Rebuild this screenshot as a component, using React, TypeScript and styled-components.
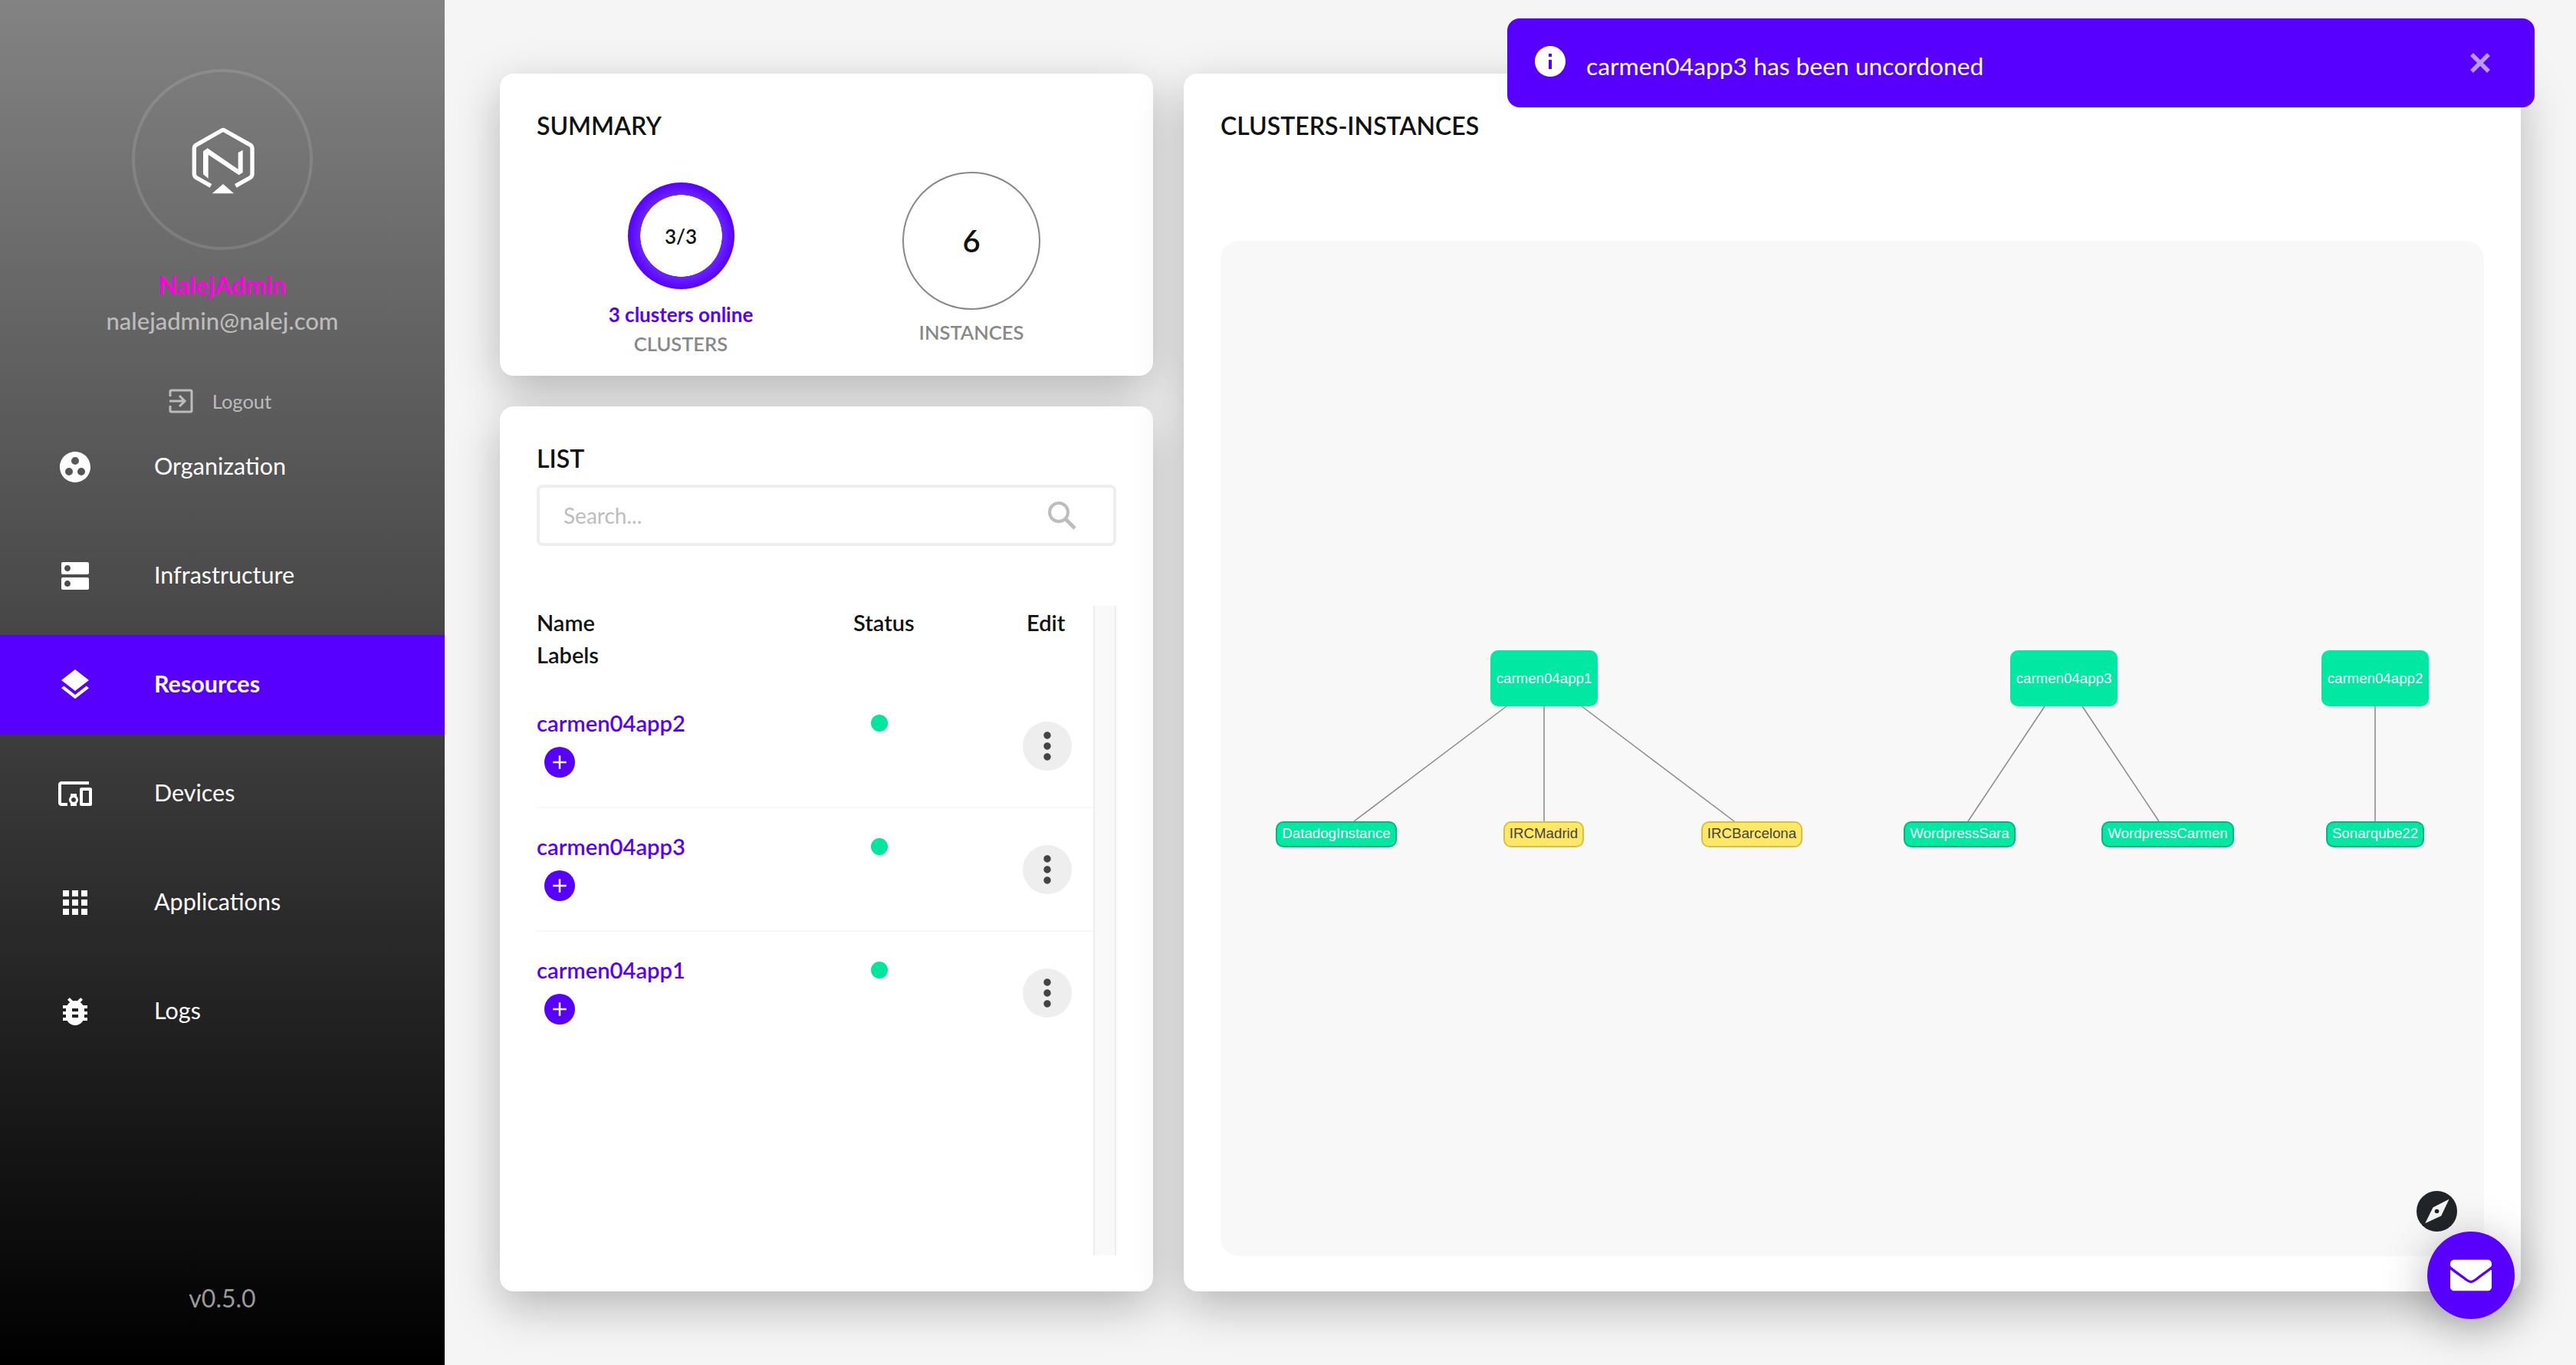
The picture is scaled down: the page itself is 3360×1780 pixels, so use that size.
import styled, { createGlobalStyle } from 'styled-components';
import { MdGroupWork, MdDns, MdLayers, MdDevicesOther, MdApps, MdBugReport, MdMoreVert, MdAdd, MdInfo } from 'react-icons/md';
import { FaEnvelope } from 'react-icons/fa';

const navItems = [
  { label: 'Organization', icon: MdGroupWork, size: 48 },
  { label: 'Infrastructure', icon: MdDns, size: 48 },
  { label: 'Resources', icon: MdLayers, size: 48, active: true },
  { label: 'Devices', icon: MdDevicesOther, size: 48 },
  { label: 'Applications', icon: MdApps, size: 48 },
  { label: 'Logs', icon: MdBugReport, size: 48 },
];

const clusters = ['carmen04app2', 'carmen04app3', 'carmen04app1'];

// positions are relative to the graph canvas
const graphRoots = [
  { label: 'carmen04app1', x: 352, y: 534 },
  { label: 'carmen04app3', x: 1030, y: 534 },
  { label: 'carmen04app2', x: 1436, y: 534 },
];

const graphLeaves = [
  { label: 'DatadogInstance', x: 72, w: 158, tone: 'green' },
  { label: 'IRCMadrid', x: 369, w: 105, tone: 'yellow' },
  { label: 'IRCBarcelona', x: 627, w: 132, tone: 'yellow' },
  { label: 'WordpressSara', x: 891, w: 146, tone: 'green' },
  { label: 'WordpressCarmen', x: 1149, w: 173, tone: 'green' },
  { label: 'Sonarqube22', x: 1442, w: 128, tone: 'green' },
];

const graphEdges = [
  [373, 607, 174, 757],
  [422, 607, 422, 757],
  [471, 607, 670, 757],
  [1075, 607, 975, 757],
  [1124, 607, 1224, 757],
  [1506, 607, 1506, 757],
];

export default function App() {
  return (
    <Page>
      <GlobalStyle />
      <Sidebar>
        <Avatar>
          <svg width="100" height="105" viewBox="0 0 300 315">
            <path
              d="M105 232 L50 201 Q40 196 40 186 L40 86 Q40 76 50 71 L148 15 Q153 12 158 15 L257 71 Q267 76 267 86 L267 186 Q267 196 257 201 L202 232"
              fill="none"
              stroke="#fff"
              strokeWidth="16"
            />
            <path d="M75 97 L92 85 L212 167 L212 102 L230 92 L230 180 L215 190 L95 110 L95 203 L75 187 Z" fill="#fff" />
            <path d="M110 262 L195 262 L153 225 Z" fill="#fff" />
          </svg>
        </Avatar>
        <UserName>NalejAdmin</UserName>
        <UserMail>nalejadmin@nalej.com</UserMail>
        <Logout>
          <svg width="32" height="32" viewBox="0 0 32 32" fill="none" stroke="#bcbcbc" strokeWidth="3">
            <path d="M2 10 V3.5 Q2 2 3.5 2 H28.5 Q30 2 30 3.5 V28.5 Q30 30 28.5 30 H3.5 Q2 30 2 28.5 V22" />
            <path d="M1 16 H21 M14 9 L21 16 L14 23" />
          </svg>
          <span>Logout</span>
        </Logout>
        <Nav>
          {navItems.map((item) => (
            <NavRow key={item.label} $active={item.active}>
              <NavIcon>
                <item.icon size={item.size} />
              </NavIcon>
              {item.label}
            </NavRow>
          ))}
        </Nav>
        <Version>v0.5.0</Version>
      </Sidebar>

      <Main>
        <LeftColumn>
          <SummaryCard>
            <CardTitle>SUMMARY</CardTitle>
            <SummaryGrid>
              <ClusterColumn>
                <Ring>3/3</Ring>
                <OnlineText>3 clusters online</OnlineText>
                <SummaryLabel>CLUSTERS</SummaryLabel>
              </ClusterColumn>
              <SummaryColumn>
                <CountCircle>6</CountCircle>
                <InstancesLabel>INSTANCES</InstancesLabel>
              </SummaryColumn>
            </SummaryGrid>
          </SummaryCard>

          <ListCard>
            <CardTitle>LIST</CardTitle>
            <SearchBox>
              <SearchInput placeholder="Search..." />
              <svg width="40" height="40" viewBox="0 0 40 40">
                <circle cx="16" cy="16" r="12" fill="none" stroke="#bdbdbd" strokeWidth="4" />
                <path d="M25 25 L37 37" stroke="#bdbdbd" strokeWidth="5" />
              </svg>
            </SearchBox>
            <TableArea>
              <TableBody>
                <HeaderRow>
                  <div>
                    <HeaderCell>Name</HeaderCell>
                    <HeaderCell>Labels</HeaderCell>
                  </div>
                  <HeaderCell>Status</HeaderCell>
                  <HeaderCell>Edit</HeaderCell>
                </HeaderRow>
                {clusters.map((name) => (
                  <ClusterRow key={name}>
                    <div>
                      <ClusterName>{name}</ClusterName>
                      <AddLabel>
                        <MdAdd size={30} />
                      </AddLabel>
                    </div>
                    <div>
                      <StatusDot />
                    </div>
                    <div>
                      <MoreButton>
                        <MdMoreVert size={56} />
                      </MoreButton>
                    </div>
                  </ClusterRow>
                ))}
              </TableBody>
              <ScrollTrack />
            </TableArea>
          </ListCard>
        </LeftColumn>

        <GraphCard>
          <CardTitle>CLUSTERS-INSTANCES</CardTitle>
          <GraphCanvas>
            <EdgeLayer>
              {graphEdges.map(([x1, y1, x2, y2]) => (
                <line key={`${x1}-${x2}`} x1={x1} y1={y1} x2={x2} y2={y2} stroke="#8a8a8a" strokeWidth="1.5" />
              ))}
            </EdgeLayer>
            {graphRoots.map((node) => (
              <RootNode key={node.label} $x={node.x} $y={node.y}>
                {node.label}
              </RootNode>
            ))}
            {graphLeaves.map((node) => (
              <LeafNode key={node.label} $x={node.x} $w={node.w} $tone={node.tone}>
                {node.label}
              </LeafNode>
            ))}
          </GraphCanvas>
        </GraphCard>
      </Main>

      <Toast>
        <ToastIcon>
          <MdInfo size={48} />
        </ToastIcon>
        <ToastText>carmen04app3 has been uncordoned</ToastText>
        <ToastClose>
          <svg width="26" height="26" viewBox="0 0 26 26" stroke="currentColor" strokeWidth="5.5">
            <path d="M2 2 L24 24 M24 2 L2 24" />
          </svg>
        </ToastClose>
      </Toast>

      <CompassBadge>
        <svg width="53" height="53" viewBox="0 0 53 53">
          <circle cx="26.5" cy="26.5" r="26.5" fill="#212529" />
          <path d="M42.5 10.8 L32.2 32.5 L11.2 42.2 L21.5 21.5 Z" fill="#f5f5f5" />
          <circle cx="26.5" cy="26.5" r="2.8" fill="#212529" />
        </svg>
      </CompassBadge>
      <MailButton>
        <FaEnvelope size={54} />
      </MailButton>
    </Page>
  );
}

const GlobalStyle = createGlobalStyle`
  html, body {
    margin: 0;
    padding: 0;
    background: #f5f5f5;
    overflow: hidden;
  }

  * {
    box-sizing: border-box;
  }
`;

const Page = styled.div`
  position: relative;
  width: 3360px;
  height: 1780px;
  display: flex;
  font-family: Lato, 'Open Sans', sans-serif;
  color: #111;
`;

const Sidebar = styled.aside`
  width: 580px;
  height: 100%;
  flex-shrink: 0;
  display: flex;
  flex-direction: column;
  align-items: center;
  padding: 90px 0 67px;
  background: linear-gradient(180deg, #838383 0%, #000 100%);
`;

const Avatar = styled.div`
  width: 236px;
  height: 236px;
  display: flex;
  align-items: center;
  justify-content: center;
  border: 4px solid rgba(255, 255, 255, 0.12);
  border-radius: 50%;
  padding-top: 19px;
`;

const UserName = styled.div`
  margin-top: 26px;
  font-size: 32px;
  line-height: 40px;
  font-weight: 700;
  color: #ff00e0;
`;

const UserMail = styled.div`
  margin-top: 6px;
  font-size: 31px;
  line-height: 40px;
  font-weight: 500;
  color: #bcbcbc;
`;

const Logout = styled.div`
  margin: 65px 6px 0 0;
  height: 40px;
  display: flex;
  align-items: center;
  gap: 25px;
  font-size: 25.5px;
  color: #bcbcbc;
`;

const Nav = styled.nav`
  width: 100%;
  margin-top: 1px;
  display: flex;
  flex-direction: column;
  gap: 12px;
`;

const NavRow = styled.div<{ $active?: boolean }>`
  height: 130px;
  padding-bottom: 5px;
  display: flex;
  align-items: center;
  font-size: 30.5px;
  font-weight: ${(props) => (props.$active ? 700 : 400)};
  color: #fff;
  background: ${(props) => (props.$active ? '#5800ff' : 'transparent')};
`;

const NavIcon = styled.span`
  width: 201px;
  margin-top: 5px;
  padding-right: 5px;
  display: flex;
  justify-content: center;
`;

const Version = styled.div`
  margin-top: auto;
  font-size: 32px;
  line-height: 40px;
  color: #999;
`;

const Main = styled.main`
  flex: 1;
  display: flex;
  gap: 40px;
  padding: 96px 72px;
`;

const LeftColumn = styled.div`
  width: 852px;
  display: flex;
  flex-direction: column;
  gap: 40px;
`;

const Card = styled.section`
  background: #fff;
  border-radius: 18px;
  padding: 48px;
  box-shadow: 0 20px 60px rgba(0, 0, 0, 0.26);
`;

const SummaryCard = styled(Card)`
  height: 394px;
`;

const ListCard = styled(Card)`
  flex: 1;
  display: flex;
  flex-direction: column;
  padding-bottom: 47px;
`;

const GraphCard = styled(Card)`
  flex: 1;
  display: flex;
  flex-direction: column;
  padding-bottom: 46px;
`;

const CardTitle = styled.h2`
  margin: 0;
  font-size: 32px;
  line-height: 40px;
  font-weight: 600;
`;

const SummaryGrid = styled.div`
  margin-top: 40px;
  display: grid;
  grid-template-columns: 1fr 1fr;
`;

const SummaryColumn = styled.div`
  display: flex;
  flex-direction: column;
  align-items: center;
`;

const ClusterColumn = styled(SummaryColumn)`
  margin-left: -2px;
  padding-top: 14px;
`;

const Ring = styled.div`
  width: 139px;
  height: 139px;
  display: flex;
  align-items: center;
  justify-content: center;
  border-radius: 50%;
  font-size: 26px;
  font-weight: 600;
  background: radial-gradient(circle, #fff 0 53px, #6a24ff 53.5px, #5800ff 69.5px);
`;

const OnlineText = styled.div`
  margin-top: 15px;
  font-size: 26px;
  line-height: 36px;
  font-weight: 700;
  color: #5800ff;
`;

const SummaryLabel = styled.div`
  margin-top: 2px;
  font-size: 25.5px;
  line-height: 36px;
  font-weight: 600;
  color: #888;
`;

const InstancesLabel = styled(SummaryLabel)`
  margin-top: 11px;
`;

const CountCircle = styled.div`
  width: 180px;
  height: 180px;
  display: flex;
  align-items: center;
  justify-content: center;
  border: 2px solid #888;
  border-radius: 50%;
  font-size: 40px;
  font-weight: 600;
`;

const SearchBox = styled.div`
  margin-top: 14px;
  height: 80px;
  display: flex;
  align-items: center;
  padding: 0 47px 0 31px;
  border: 4px solid #eee;
  border-radius: 8px;
`;

const SearchInput = styled.input`
  flex: 1;
  border: 0;
  outline: 0;
  padding: 0;
  background: transparent;
  font-family: inherit;
  font-size: 28px;

  &::placeholder {
    color: #bdbdbd;
  }
`;

const TableArea = styled.div`
  flex: 1;
  margin-top: 78px;
  display: flex;
`;

const TableBody = styled.div`
  flex: 1;
`;

const HeaderRow = styled.div`
  height: 103px;
  padding-top: 1px;
  display: grid;
  grid-template-columns: 413px 226px 1fr;
`;

const HeaderCell = styled.div`
  font-size: 29px;
  line-height: 42px;
  font-weight: 600;
`;

const ClusterRow = styled.div`
  height: 161px;
  display: grid;
  grid-template-columns: 413px 226px 1fr;
  border-bottom: 2px solid #f7f7f7;

  &:last-child {
    border-bottom: 0;
  }
`;

const ClusterName = styled.div`
  margin-top: 30px;
  font-size: 29.2px;
  line-height: 40px;
  font-weight: 600;
  color: #5800ff;
`;

const AddLabel = styled.div`
  width: 40px;
  height: 40px;
  margin: 11px 0 0 10px;
  display: flex;
  align-items: center;
  justify-content: center;
  border-radius: 50%;
  background: #5800ff;
  color: #fff;
`;

const StatusDot = styled.div`
  width: 22px;
  height: 22px;
  margin: 39px 0 0 23px;
  border-radius: 50%;
  background: #00e69f;
`;

const MoreButton = styled.div`
  width: 64px;
  height: 64px;
  margin: 48px 0 0 -5px;
  display: flex;
  align-items: center;
  justify-content: center;
  border-radius: 50%;
  background: #eee;
  color: #444;
`;

const ScrollTrack = styled.div`
  width: 30px;
  background: #f9f9f9;
  border-left: 2px solid #eee;
  border-right: 2px solid #eee;
`;

const GraphCanvas = styled.div`
  position: relative;
  flex: 1;
  margin-top: 130px;
  border-radius: 24px;
  background: #f8f8f8;
  font-family: 'Liberation Sans', Arial, sans-serif;
  font-size: 18.7px;
`;

const EdgeLayer = styled.svg`
  position: absolute;
  inset: 0;
  width: 100%;
  height: 100%;
`;

const RootNode = styled.div<{ $x: number; $y: number }>`
  position: absolute;
  left: ${(props) => props.$x}px;
  top: ${(props) => props.$y}px;
  width: 140px;
  height: 73px;
  display: flex;
  align-items: center;
  justify-content: center;
  border-radius: 10px;
  background: #00e8a2;
  color: #fff;
`;

const LeafNode = styled.div<{ $x: number; $w: number; $tone: string }>`
  position: absolute;
  left: ${(props) => props.$x}px;
  top: 757px;
  width: ${(props) => props.$w}px;
  height: 34px;
  padding-bottom: 2px;
  display: flex;
  align-items: center;
  justify-content: center;
  border: 2px solid ${(props) => (props.$tone === 'yellow' ? '#d8c03c' : '#00b783')};
  border-radius: 10px;
  background: ${(props) => (props.$tone === 'yellow' ? '#ffe866' : '#00e8a2')};
  color: ${(props) => (props.$tone === 'yellow' ? '#444' : '#fff')};
`;

const Toast = styled.div`
  position: absolute;
  left: 1966px;
  top: 24px;
  width: 1340px;
  height: 116px;
  display: flex;
  align-items: center;
  padding: 0 58px 0 32px;
  border-radius: 16px;
  background: #5800ff;
  color: #fff;
`;

const ToastIcon = styled.span`
  display: flex;
  margin-top: -4px;
`;

const ToastText = styled.div`
  flex: 1;
  margin: 8px 0 0 23px;
  font-size: 31.8px;
`;

const ToastClose = styled.span`
  display: flex;
  color: rgba(255, 255, 255, 0.6);
`;

const CompassBadge = styled.div`
  position: absolute;
  left: 3152px;
  top: 1553px;
  display: flex;
`;

const MailButton = styled.div`
  position: absolute;
  left: 3166px;
  top: 1606px;
  width: 114px;
  height: 114px;
  display: flex;
  align-items: center;
  justify-content: center;
  border-radius: 50%;
  background: #5800ff;
  color: #fff;
  box-shadow: 0 10px 60px rgba(0, 0, 0, 0.3);
`;
